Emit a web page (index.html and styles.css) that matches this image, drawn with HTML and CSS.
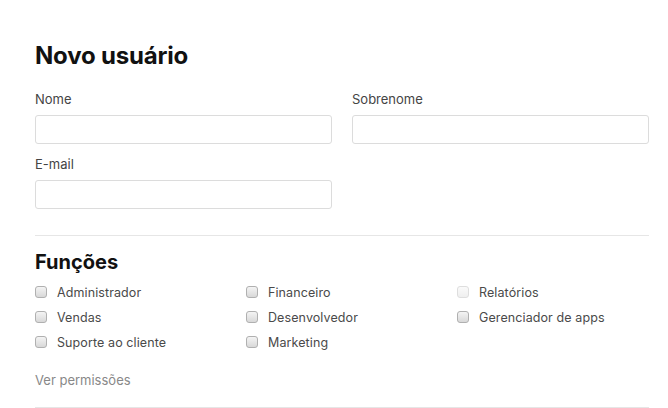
FILE: index.html
```html
<!DOCTYPE html>
<html lang="pt">
<head>
<meta charset="utf-8">
<link rel="stylesheet" href="styles.css">
</head>
<body>
<main class="page">
  <h1 class="title">Novo usuário</h1>
  <div class="fields">
    <div class="field">
      <label class="label">Nome</label>
      <input class="input" type="text">
    </div>
    <div class="field">
      <label class="label">Sobrenome</label>
      <input class="input" type="text">
    </div>
    <div class="field">
      <label class="label">E-mail</label>
      <input class="input" type="text">
    </div>
  </div>
  <hr class="divider">
  <h2 class="subtitle">Funções</h2>
  <div class="roles">
    <label class="role"><span class="box"></span>Administrador</label>
    <label class="role"><span class="box"></span>Financeiro</label>
    <label class="role"><span class="box disabled"></span>Relatórios</label>
    <label class="role"><span class="box"></span>Vendas</label>
    <label class="role"><span class="box"></span>Desenvolvedor</label>
    <label class="role"><span class="box"></span>Gerenciador de apps</label>
    <label class="role"><span class="box"></span>Suporte ao cliente</label>
    <label class="role"><span class="box"></span>Marketing</label>
  </div>
  <a class="link">Ver permissões</a>
  <hr class="divider bottom">
</main>
</body>
</html>
```
FILE: styles.css
```css
* { box-sizing: border-box; }
html, body { margin: 0; background: #fff; }
body { font-family: Inter, "Noto Sans", sans-serif; color: #222; }
.page { width: 614px; margin-left: 35px; padding-top: 41px; }
.title { margin: 0; font-size: 24px; line-height: 30px; font-weight: 700; color: #111; letter-spacing: -0.2px; }
.fields { display: grid; grid-template-columns: 297px 297px; column-gap: 20px; row-gap: 12px; margin-top: 20px; }
.field { display: flex; flex-direction: column; }
.label { font-size: 13px; line-height: 16px; color: #444; margin-bottom: 8px; }
.input { height: 29px; border: 1px solid #dcdcdc; border-radius: 3px; background: #fff; margin: 0; padding: 0 8px; }
.divider { border: 0; border-top: 1px solid #e6e6e6; margin: 26px 0 0; }
.subtitle { margin: 14px 0 0; font-size: 20px; line-height: 24px; font-weight: 700; color: #111; }
.roles { display: grid; grid-template-columns: 211px 211px 192px; row-gap: 9px; margin-top: 11px; }
.role { display: flex; align-items: center; font-size: 12.5px; line-height: 16px; color: #4a4a4a; letter-spacing: 0.1px; }
.box { width: 12px; height: 12px; border: 1px solid #b0b0b0; border-radius: 3px; background: linear-gradient(#f4f4f4, #d8d8d8); margin-right: 10px; margin-top: -3px; flex: none; }
.box.disabled { border-color: #dedede; background: linear-gradient(#fafafa, #efefef); }
.link { display: block; margin-top: 21px; font-size: 13px; line-height: 16px; color: #888; }
.divider.bottom { margin-top: 19px; }
```
